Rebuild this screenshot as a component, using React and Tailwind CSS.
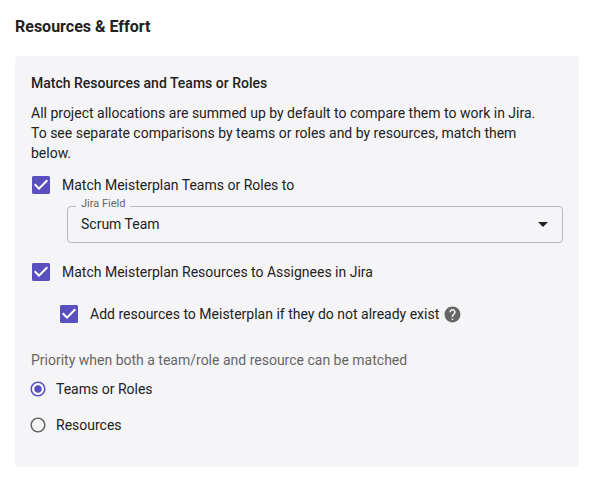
import { useState } from "react";
import { MdArrowDropDown, MdCheckBox, MdHelp, MdRadioButtonChecked, MdRadioButtonUnchecked } from "react-icons/md";

function Checkbox({ id, label, checked, onChange }) {
  return (
    <div className="flex items-center gap-3">
      <span className="grid size-[18px] shrink-0 place-items-center rounded-xs bg-white">
        <input
          id={id}
          type="checkbox"
          checked={checked}
          onChange={(e) => onChange(e.target.checked)}
          className="peer col-start-1 row-start-1 size-[18px] appearance-none rounded-xs border-2 border-[#666]"
        />
        <MdCheckBox className="pointer-events-none invisible col-start-1 row-start-1 -m-[3px] size-6 text-[#5850bf] peer-checked:visible" />
      </span>
      <label htmlFor={id}>{label}</label>
    </div>
  );
}

function Radio({ id, label, checked, onChange }) {
  const Icon = checked ? MdRadioButtonChecked : MdRadioButtonUnchecked;
  return (
    <div className="flex h-9 items-center gap-[9px]">
      <span className="grid shrink-0 place-items-center">
        <input
          id={id}
          type="radio"
          name="priority"
          checked={checked}
          onChange={onChange}
          className="peer col-start-1 row-start-1 size-4 appearance-none rounded-full"
        />
        <Icon className="pointer-events-none col-start-1 row-start-1 size-[18px] text-[#666] peer-checked:text-[#5850bf]" />
      </span>
      <label htmlFor={id}>{label}</label>
    </div>
  );
}

export default function App() {
  const [matchTeams, setMatchTeams] = useState(true);
  const [matchResources, setMatchResources] = useState(true);
  const [addResources, setAddResources] = useState(true);
  const [priority, setPriority] = useState("teams");

  return (
    <main className="pt-[15px] pr-3 pb-3 pl-[15px] font-['Roboto',sans-serif] text-sm text-[#222]">
      <h1 className="text-base leading-6 font-bold">Resources &amp; Effort</h1>
      <section className="mt-[17px] rounded bg-[#f5f5f8] px-4 pt-[17px] pb-6">
        <h2 className="leading-5 font-medium">Match Resources and Teams or Roles</h2>
        <p className="mt-[10px] pr-3 leading-5">
          All project allocations are summed up by default to compare them to work in Jira. To see separate
          comparisons by teams or roles and by resources, match them below.
        </p>

        <div className="mt-3 pl-px">
          <Checkbox id="match-teams" label="Match Meisterplan Teams or Roles to" checked={matchTeams} onChange={setMatchTeams} />
        </div>
        <fieldset className="mt-[3px] ml-9 rounded border border-[#b9b9bb]">
          <legend className="ml-2 px-[5px] pb-1 text-[11px] leading-3 text-[#666]">
            <label htmlFor="jira-field">Jira Field</label>
          </legend>
          <div className="-mt-2 grid items-center">
            <select id="jira-field" className="col-start-1 row-start-1 h-9 w-full appearance-none bg-transparent pr-8 pl-[13px]">
              <option>Scrum Team</option>
            </select>
            <MdArrowDropDown className="pointer-events-none col-start-1 row-start-1 mr-[7px] size-6 justify-self-end" />
          </div>
        </fieldset>
        <div className="mt-[19px] pl-px">
          <Checkbox id="match-resources" label="Match Meisterplan Resources to Assignees in Jira" checked={matchResources} onChange={setMatchResources} />
        </div>
        <div className="mt-[22px] flex items-center gap-1 pl-[29px]">
          <Checkbox id="add-resources" label="Add resources to Meisterplan if they do not already exist" checked={addResources} onChange={setAddResources} />
          <button type="button" aria-label="Help" className="text-[#666]">
            <MdHelp className="size-[19px]" />
          </button>
        </div>

        <fieldset className="mt-[26px]">
          <legend className="leading-5 text-[#666]">Priority when both a team/role and resource can be matched</legend>
          <div className="-ml-0.5 pt-px">
            <Radio id="priority-teams" label="Teams or Roles" checked={priority === "teams"} onChange={() => setPriority("teams")} />
            <Radio id="priority-resources" label="Resources" checked={priority === "resources"} onChange={() => setPriority("resources")} />
          </div>
        </fieldset>
      </section>
    </main>
  );
}
